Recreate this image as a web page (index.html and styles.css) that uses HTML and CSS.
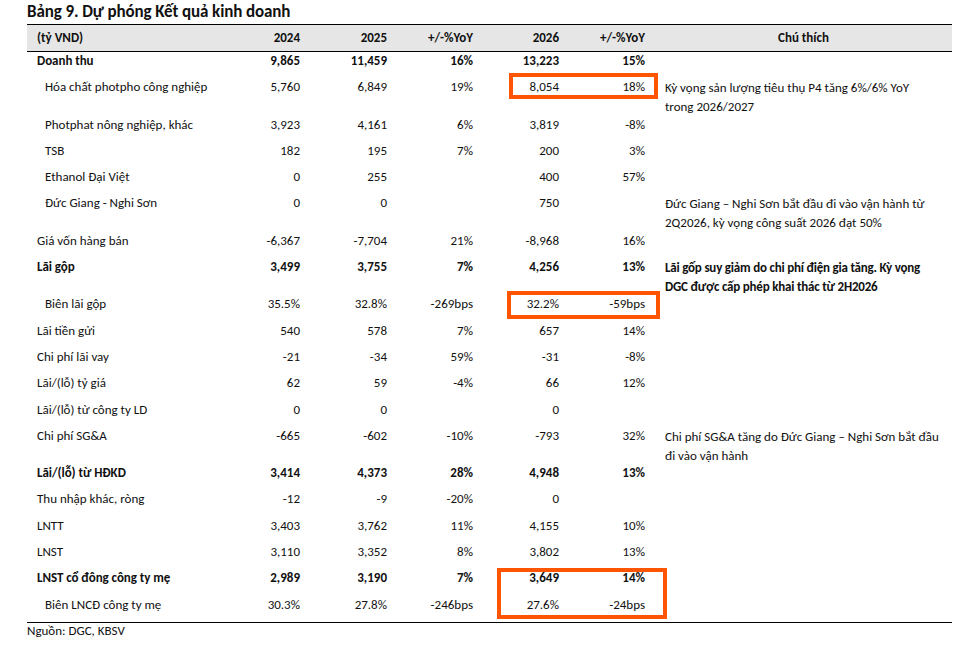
FILE: index.html
```html
<!DOCTYPE html>
<html lang="vi">
<head>
<meta charset="utf-8">
<title>Bảng 9</title>
<link rel="stylesheet" href="styles.css">
</head>
<body>
<div class="page">
  <h1 class="title">Bảng 9. Dự phóng Kết quả kinh doanh</h1>
  <div class="tbl">
    <div class="row head">
      <div class="lbl">(tỷ VND)</div>
      <div class="num">2024</div>
      <div class="num">2025</div>
      <div class="num">+/-%YoY</div>
      <div class="num">2026</div>
      <div class="num">+/-%YoY</div>
      <div class="note">Chú thích</div>
    </div>

    <div class="row bold">
      <div class="lbl">Doanh thu</div>
      <div class="num">9,865</div><div class="num">11,459</div><div class="num">16%</div>
      <div class="num">13,223</div><div class="num">15%</div><div class="note"></div>
    </div>
    <div class="row tall">
      <div class="lbl sub">Hóa chất photpho công nghiệp</div>
      <div class="num">5,760</div><div class="num">6,849</div><div class="num">19%</div>
      <div class="num">8,054</div><div class="num">18%</div>
      <div class="note">Kỳ vọng sản lượng tiêu thụ P4 tăng 6%/6% YoY<br>trong 2026/2027</div>
    </div>
    <div class="row">
      <div class="lbl sub">Photphat nông nghiệp, khác</div>
      <div class="num">3,923</div><div class="num">4,161</div><div class="num">6%</div>
      <div class="num">3,819</div><div class="num">-8%</div><div class="note"></div>
    </div>
    <div class="row">
      <div class="lbl sub">TSB</div>
      <div class="num">182</div><div class="num">195</div><div class="num">7%</div>
      <div class="num">200</div><div class="num">3%</div><div class="note"></div>
    </div>
    <div class="row">
      <div class="lbl sub">Ethanol Đại Việt</div>
      <div class="num">0</div><div class="num">255</div><div class="num"></div>
      <div class="num">400</div><div class="num">57%</div><div class="note"></div>
    </div>
    <div class="row tall">
      <div class="lbl sub">Đức Giang - Nghi Sơn</div>
      <div class="num">0</div><div class="num">0</div><div class="num"></div>
      <div class="num">750</div><div class="num"></div>
      <div class="note">Đức Giang – Nghi Sơn bắt đầu đi vào vận hành từ<br>2Q2026, kỳ vọng công suất 2026 đạt 50%</div>
    </div>
    <div class="row">
      <div class="lbl">Giá vốn hàng bán</div>
      <div class="num">-6,367</div><div class="num">-7,704</div><div class="num">21%</div>
      <div class="num">-8,968</div><div class="num">16%</div><div class="note"></div>
    </div>
    <div class="row tall bold">
      <div class="lbl">Lãi gộp</div>
      <div class="num">3,499</div><div class="num">3,755</div><div class="num">7%</div>
      <div class="num">4,256</div><div class="num">13%</div>
      <div class="note">Lãi gốp suy giảm do chi phí điện gia tăng. Kỳ vọng<br>DGC được cấp phép khai thác từ 2H2026</div>
    </div>
    <div class="row">
      <div class="lbl sub">Biên lãi gộp</div>
      <div class="num">35.5%</div><div class="num">32.8%</div><div class="num">-269bps</div>
      <div class="num">32.2%</div><div class="num">-59bps</div><div class="note"></div>
    </div>
    <div class="row">
      <div class="lbl">Lãi tiền gửi</div>
      <div class="num">540</div><div class="num">578</div><div class="num">7%</div>
      <div class="num">657</div><div class="num">14%</div><div class="note"></div>
    </div>
    <div class="row">
      <div class="lbl">Chi phí lãi vay</div>
      <div class="num">-21</div><div class="num">-34</div><div class="num">59%</div>
      <div class="num">-31</div><div class="num">-8%</div><div class="note"></div>
    </div>
    <div class="row">
      <div class="lbl">Lãi/(lỗ) tỷ giá</div>
      <div class="num">62</div><div class="num">59</div><div class="num">-4%</div>
      <div class="num">66</div><div class="num">12%</div><div class="note"></div>
    </div>
    <div class="row">
      <div class="lbl">Lãi/(lỗ) từ công ty LD</div>
      <div class="num">0</div><div class="num">0</div><div class="num"></div>
      <div class="num">0</div><div class="num"></div><div class="note"></div>
    </div>
    <div class="row tall">
      <div class="lbl">Chi phí SG&amp;A</div>
      <div class="num">-665</div><div class="num">-602</div><div class="num">-10%</div>
      <div class="num">-793</div><div class="num">32%</div>
      <div class="note">Chi phí SG&amp;A tăng do Đức Giang – Nghi Sơn bắt đầu<br>đi vào vận hành</div>
    </div>
    <div class="row bold">
      <div class="lbl">Lãi/(lỗ) từ HĐKD</div>
      <div class="num">3,414</div><div class="num">4,373</div><div class="num">28%</div>
      <div class="num">4,948</div><div class="num">13%</div><div class="note"></div>
    </div>
    <div class="row">
      <div class="lbl">Thu nhập khác, ròng</div>
      <div class="num">-12</div><div class="num">-9</div><div class="num">-20%</div>
      <div class="num">0</div><div class="num"></div><div class="note"></div>
    </div>
    <div class="row">
      <div class="lbl">LNTT</div>
      <div class="num">3,403</div><div class="num">3,762</div><div class="num">11%</div>
      <div class="num">4,155</div><div class="num">10%</div><div class="note"></div>
    </div>
    <div class="row">
      <div class="lbl">LNST</div>
      <div class="num">3,110</div><div class="num">3,352</div><div class="num">8%</div>
      <div class="num">3,802</div><div class="num">13%</div><div class="note"></div>
    </div>
    <div class="row bold">
      <div class="lbl">LNST cổ đông công ty mẹ</div>
      <div class="num">2,989</div><div class="num">3,190</div><div class="num">7%</div>
      <div class="num">3,649</div><div class="num">14%</div><div class="note"></div>
    </div>
    <div class="row">
      <div class="lbl sub">Biên LNCĐ công ty mẹ</div>
      <div class="num">30.3%</div><div class="num">27.8%</div><div class="num">-246bps</div>
      <div class="num">27.6%</div><div class="num">-24bps</div><div class="note"></div>
    </div>
  </div>
  <div class="source">Nguồn: DGC, KBSV</div>

  <div class="hl hl-1"></div>
  <div class="hl hl-2"></div>
  <div class="hl hl-3"></div>
</div>
</body>
</html>
```

FILE: styles.css
```css
html, body {
  margin: 0;
  padding: 0;
  background: #ffffff;
}

.page {
  position: relative;
  width: 972px;
  height: 646px;
  padding-left: 27px;
  box-sizing: border-box;
  font-family: "Carlito", "Lato", "Liberation Sans", sans-serif;
  color: #111111;
  font-size: 13px;
}

.title {
  margin: 0;
  height: 24px;
  line-height: 24px;
  font-size: 17px;
  font-weight: 700;
  letter-spacing: -0.1px;
  color: #111111;
}

.tbl {
  width: 925px;
  border-bottom: 1px solid #000000;
}

.row {
  display: grid;
  grid-template-columns: 187px 86px 87px 86px 86px 86px 1fr;
  height: 26.3px;
  align-items: start;
  line-height: 18px;
}

.row.tall {
  height: 37.3px;
}

.row.bold {
  font-weight: 700;
}

.row.bold .lbl {
  letter-spacing: -0.05px;
}

.row.bold .note {
  letter-spacing: -0.2px;
}

.row.head {
  box-sizing: border-box;
  height: 28px;
  align-items: center;
  background: #e6e6e6;
  border-top: 1px solid #000000;
  border-bottom: 1px solid #000000;
  font-weight: 700;
  padding-bottom: 1px;
}

.lbl {
  padding-left: 10px;
  white-space: nowrap;
}

.lbl.sub {
  padding-left: 18px;
}

.num {
  text-align: right;
  white-space: nowrap;
}

.note {
  padding-left: 20px;
  line-height: 19px;
  white-space: nowrap;
}

.head .note {
  padding-left: 10px;
  text-align: center;
  line-height: 18px;
}

.source {
  line-height: 16px;
  font-size: 13px;
}

.hl {
  position: absolute;
  box-sizing: border-box;
  border: 4px solid #ff5500;
}

.hl-1 { left: 509px; top: 73px; width: 149px; height: 26px; }
.hl-2 { left: 507px; top: 291px; width: 153px; height: 28px; }
.hl-3 { left: 497px; top: 568px; width: 170px; height: 51px; }
```
